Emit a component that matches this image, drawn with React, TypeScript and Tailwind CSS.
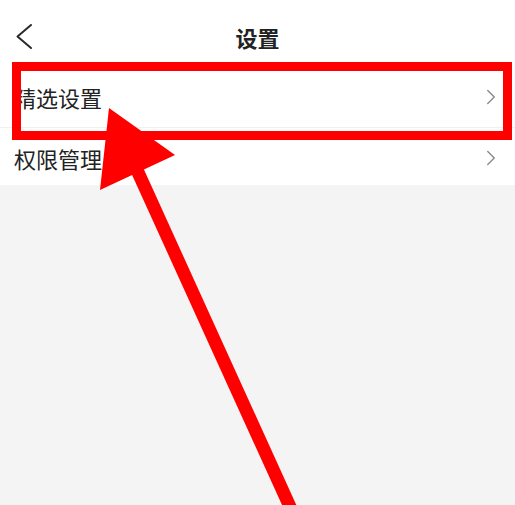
import { ChevronRight } from "lucide-react";

const rows = ["精选设置", "权限管理"];

export default function App() {
  return (
    <div
      className="relative h-[505px] w-[515px] overflow-hidden bg-[#f4f4f4] text-[#222]"
      style={{ fontFamily: '"Noto Sans CJK SC", "Noto Sans", sans-serif' }}
    >
      <div className="bg-white">
        <header className="relative flex h-[67px] items-center justify-center">
          <svg
            aria-hidden="true"
            className="absolute left-0 top-0"
            width="48"
            height="67"
            viewBox="0 0 48 67"
          >
            <polyline
              points="31,25 17.5,36.5 31,48"
              fill="none"
              stroke="#2a2a2a"
              strokeWidth="2"
              strokeLinecap="round"
              strokeLinejoin="round"
            />
          </svg>
          <h1 className="pt-[7px] text-[22px] font-bold leading-none">设置</h1>
        </header>
        <div className="flex h-[61px] items-center justify-between border-b border-[#f0f0f0] pl-[14px] pr-[11px]">
          <span className="text-[22px] leading-none">{rows[0]}</span>
          <ChevronRight className="h-[26px] w-[26px] text-[#8a8a8a]" strokeWidth={1.3} />
        </div>
        <div className="flex h-[57px] items-center justify-between pl-[14px] pr-[11px] pt-[2px]">
          <span className="text-[22px] leading-none">{rows[1]}</span>
          <ChevronRight className="h-[26px] w-[26px] text-[#8a8a8a]" strokeWidth={1.3} />
        </div>
      </div>

      {/* annotation: highlight box */}
      <div className="pointer-events-none absolute left-[12px] top-[62px] h-[78px] w-[500px] border-[9px] border-[#ff0000]" />

      {/* annotation: arrow */}
      <svg
        className="pointer-events-none absolute left-0 top-0"
        width="515"
        height="505"
        viewBox="0 0 515 505"
      >
        <line x1="137" y1="170" x2="296" y2="520" stroke="#ff0000" strokeWidth="13" />
        <polygon points="109,108 100,190 175,155" fill="#ff0000" />
      </svg>
    </div>
  );
}
